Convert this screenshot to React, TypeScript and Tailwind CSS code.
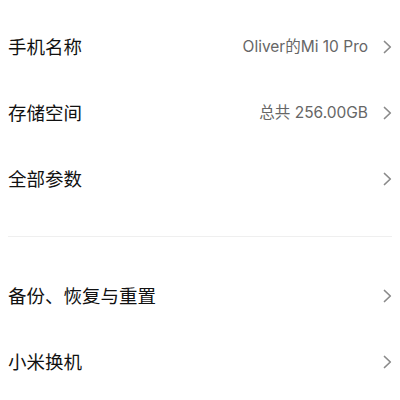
import React from "react";

const font = { fontFamily: '"Noto Sans CJK SC", "Noto Sans", sans-serif' };
const valueFont = { fontFamily: 'Inter, "Noto Sans CJK SC", sans-serif' };

function Chevron() {
  return (
    <svg width="9" height="14" viewBox="0 0 9 14" className="shrink-0">
      <path d="M1.5 1.5 L7.3 7 L1.5 12.5" fill="none" stroke="#8a8a8a" strokeWidth="1.7" strokeLinecap="round" strokeLinejoin="round" />
    </svg>
  );
}

function Row({ title, value }: { title: string; value?: string }) {
  return (
    <div className="flex h-[66px] items-center justify-between pl-[8px] pr-[8px]">
      <span className="text-[18.5px] text-[#111111]">{title}</span>
      <div className="flex items-center gap-[15px]">
        {value && (
          <span className="text-[15.5px] text-[#666666]" style={valueFont}>
            {value}
          </span>
        )}
        <Chevron />
      </div>
    </div>
  );
}

export default function App() {
  return (
    <div className="h-[400px] w-[400px] overflow-hidden bg-white" style={font}>
      <div className="pt-[14px]">
        <Row title="手机名称" value="Oliver的Mi 10 Pro" />
        <Row title="存储空间" value="总共 256.00GB" />
        <Row title="全部参数" />
      </div>
      <div className="mx-[8px] mt-[24px] h-px bg-[#efefef]" />
      <div className="pt-[26px]">
        <Row title="备份、恢复与重置" />
        <Row title="小米换机" />
      </div>
    </div>
  );
}
